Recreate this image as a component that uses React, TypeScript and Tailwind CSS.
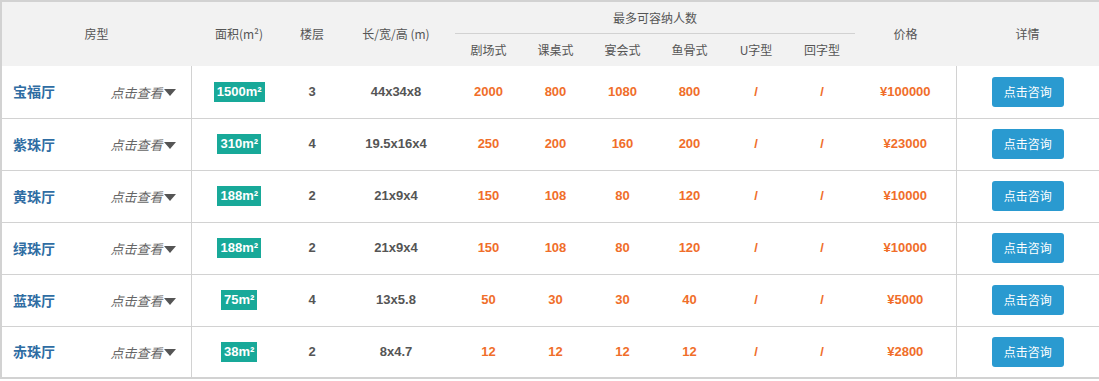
const halls = [
  { name: "宝福厅", area: "1500", floor: "3", size: "44x34x8", cap: ["2000", "800", "1080", "800", "/", "/"], price: "100000" },
  { name: "紫珠厅", area: "310", floor: "4", size: "19.5x16x4", cap: ["250", "200", "160", "200", "/", "/"], price: "23000" },
  { name: "黄珠厅", area: "188", floor: "2", size: "21x9x4", cap: ["150", "108", "80", "120", "/", "/"], price: "10000" },
  { name: "绿珠厅", area: "188", floor: "2", size: "21x9x4", cap: ["150", "108", "80", "120", "/", "/"], price: "10000" },
  { name: "蓝珠厅", area: "75", floor: "4", size: "13x5.8", cap: ["50", "30", "30", "40", "/", "/"], price: "5000" },
  { name: "赤珠厅", area: "38", floor: "2", size: "8x4.7", cap: ["12", "12", "12", "12", "/", "/"], price: "2800" },
];

const layouts = ["剧场式", "课桌式", "宴会式", "鱼骨式", "U字型", "回字型"];

function Caret() {
  return (
    <svg width="12" height="8" viewBox="0 0 12 8" className="inline-block ml-[1px] mb-[2px]">
      <path d="M0 0 L12 0 L6 7 Z" fill="#555" />
    </svg>
  );
}

export default function App() {
  const cjk = { fontFamily: '"Noto Sans CJK SC", "Liberation Sans", sans-serif' };
  const num = { fontFamily: '"Liberation Sans", "Noto Sans CJK SC", sans-serif' };

  return (
    <div className="w-[1099px] h-[381px] bg-white overflow-hidden">
      <div className="w-[1099px] border-t-2 border-l-2 border-b-2 border-[#d2d2d2]">
        <table className="w-[1097px] table-fixed border-collapse text-[12px] text-[#555]" style={cjk}>
          <colgroup>
            <col className="w-[189px]" />
            <col className="w-[96px]" />
            <col className="w-[50px]" />
            <col className="w-[118px]" />
            <col className="w-[67px]" />
            <col className="w-[67px]" />
            <col className="w-[67px]" />
            <col className="w-[67px]" />
            <col className="w-[66px]" />
            <col className="w-[66px]" />
            <col className="w-[101px]" />
            <col className="w-[143px]" />
          </colgroup>
          <thead className="bg-[#f2f2f2]">
            <tr className="h-[32px]">
              <th rowSpan={2} className="p-0 font-normal text-center">房型</th>
              <th rowSpan={2} className="p-0 font-normal text-center">面积(m²)</th>
              <th rowSpan={2} className="p-0 font-normal text-center">楼层</th>
              <th rowSpan={2} className="p-0 font-normal text-center">长/宽/高 (m)</th>
              <th colSpan={6} className="p-0 font-normal text-center">
                <div className="border-b border-[#d2d2d2] h-[32px] leading-[32px]">最多可容纳人数</div>
              </th>
              <th rowSpan={2} className="p-0 font-normal text-center">价格</th>
              <th rowSpan={2} className="p-0 font-normal text-center">详情</th>
            </tr>
            <tr className="h-[32px]">
              {layouts.map((l) => (
                <th key={l} className="p-0 font-normal text-center">{l}</th>
              ))}
            </tr>
          </thead>
          <tbody>
            {halls.map((h, i) => (
              <tr key={h.name} className={i === halls.length - 1 ? "h-[51px]" : "h-[52px] border-b border-[#d2d2d2]"}>
                <td className="border-r border-[#d2d2d2] px-[11px]">
                  <div className="flex items-center justify-between">
                    <span className="text-[14px] font-bold text-[#2f6da3]">{h.name}</span>
                    <span className="text-[13px] italic text-[#666] mr-[4px] mt-[2px]">
                      点击查看<Caret />
                    </span>
                  </div>
                </td>
                <td className="text-center">
                  <span className="inline-block bg-[#18a999] text-white font-bold text-[13px] leading-[20px] px-[3px]" style={num}>
                    {h.area}m²
                  </span>
                </td>
                <td className="text-center font-bold text-[13px]" style={num}>{h.floor}</td>
                <td className="text-center font-bold text-[13px]" style={num}>{h.size}</td>
                {h.cap.map((c, j) => (
                  <td key={j} className="text-center font-bold text-[13px] text-[#f06e2a]" style={num}>{c}</td>
                ))}
                <td className="text-center font-bold text-[13px] text-[#f06e2a]" style={num}>¥{h.price}</td>
                <td className="border-l border-[#d2d2d2] text-center">
                  <button className="w-[72px] h-[30px] rounded-[3px] bg-[#2a9ad0] text-white text-[12px]" style={cjk}>
                    点击咨询
                  </button>
                </td>
              </tr>
            ))}
          </tbody>
        </table>
      </div>
    </div>
  );
}
